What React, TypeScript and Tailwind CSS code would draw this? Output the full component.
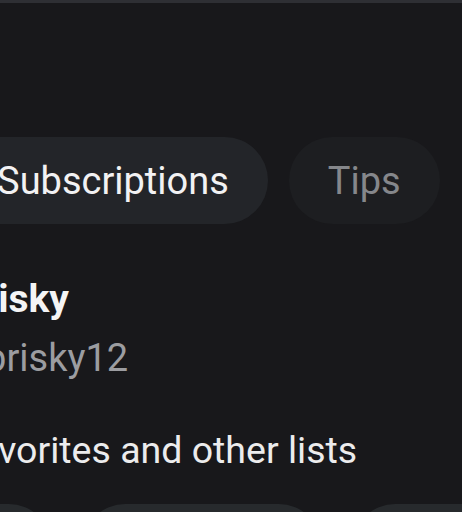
import React from 'react';

// Profile screen, cropped view: tab pills, user name, handle and lists section

const tabs = [
  { label: 'Posts', active: false },
  { label: 'Subscriptions', active: true },
  { label: 'Tips', active: false },
];

const chips = [
  { label: 'All', width: 'w-[150px]' },
  { label: 'Favorites', width: 'w-[240px]' },
  { label: 'Watch later', width: 'w-[250px]' },
];

export default function App() {
  return (
    <div className="w-[462px] h-[512px] overflow-hidden bg-[#18181b] font-['Roboto',sans-serif]">
      {/* Top divider */}
      <div className="h-[3px] bg-[#2e2f34]" />

      {/* Tab pills */}
      <div className="mt-[134px] flex gap-[21px] -ml-[238px] w-max">
        {tabs.map((tab) => (
          <div
            key={tab.label}
            className={
              tab.active
                ? 'h-[87px] px-[39px] rounded-full bg-[#232529] flex items-center text-[38px] leading-none text-[#f2f2f3]'
                : 'h-[87px] px-[39px] rounded-full bg-[#1d1e21] flex items-center text-[38px] leading-none text-[#85878b]'
            }
          >
            {tab.label}
          </div>
        ))}
      </div>

      {/* Name and handle */}
      <div className="mt-[52px] -ml-[41px] text-[39px] leading-[46px] font-bold text-[#f4f4f5] whitespace-nowrap">
        Brisky
      </div>
      <div className="mt-[14px] -ml-[49px] text-[38px] leading-[44px] text-[#9c9da1] whitespace-nowrap">
        @brisky12
      </div>

      {/* Lists */}
      <div className="mt-[47px] -ml-[42px] text-[37.5px] leading-[46px] text-[#ececed] whitespace-nowrap">
        Favorites and other lists
      </div>
      <div className="mt-[31px] flex gap-[30px] -ml-[98px] w-max">
        {chips.map((chip) => (
          <div
            key={chip.label}
            className={`h-[87px] ${chip.width} rounded-full bg-[#272a2d] flex items-center justify-center text-[36px] text-[#ececed]`}
          >
            {chip.label}
          </div>
        ))}
      </div>
    </div>
  );
}
